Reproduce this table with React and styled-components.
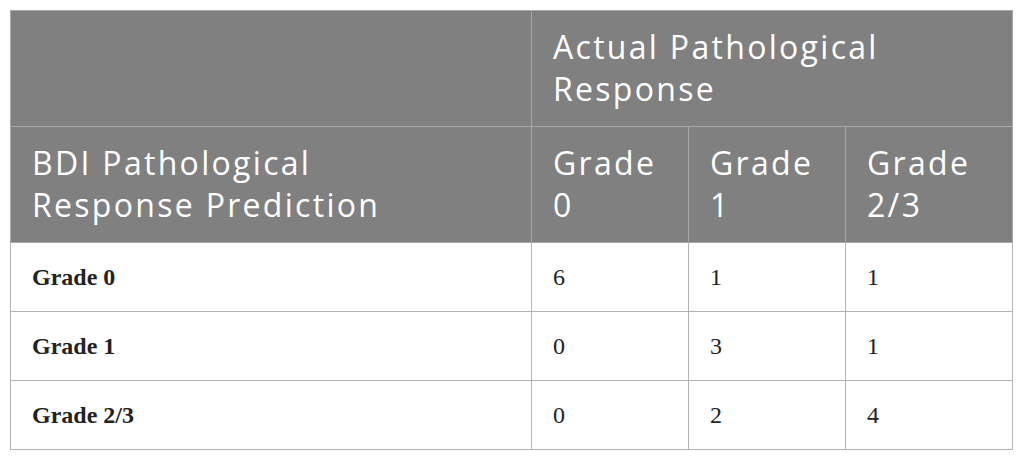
import styled, { createGlobalStyle } from 'styled-components';

const GlobalStyle = createGlobalStyle`
  html, body {
    margin: 0;
    padding: 0;
    background: #ffffff;
  }
`;

const Page = styled.div`
  padding: 10px 13px 10px 10px;
`;

const Table = styled.table`
  width: 1002px;
  border-collapse: collapse;
  table-layout: fixed;
  border: 1px solid #b3b3b3;
`;

const HeadRow = styled.tr`
  height: 116px;
  background-color: #808080;
`;

const HeadCell = styled.th`
  padding: 13px 21px 15px;
  border: 1px solid #a8a8a8;
  color: #ffffff;
  font-family: 'Open Sans', Lato, sans-serif;
  font-weight: 400;
  font-size: 32px;
  letter-spacing: 2.3px;
  line-height: 42px;
  text-align: left;
  vertical-align: middle;
  white-space: nowrap;
`;

const BodyRow = styled.tr`
  height: 69px;
`;

const BodyCell = styled.td`
  padding: 0 21px;
  border: 1px solid #b3b3b3;
  color: #222222;
  font-family: 'Liberation Serif', 'Times New Roman', serif;
  font-size: 24px;
  font-weight: ${(props) => (props.$label ? 700 : 400)};
  vertical-align: middle;
`;

const rows = [
  { label: 'Grade 0', values: [6, 1, 1] },
  { label: 'Grade 1', values: [0, 3, 1] },
  { label: 'Grade 2/3', values: [0, 2, 4] },
];

function App() {
  return (
    <Page>
      <GlobalStyle />
      <Table>
        <colgroup>
          <col style={{ width: 521 }} />
          <col style={{ width: 157 }} />
          <col style={{ width: 157 }} />
          <col style={{ width: 167 }} />
        </colgroup>
        <thead>
          <HeadRow>
            <HeadCell />
            <HeadCell colSpan={3}>
              Actual Pathological
              <br />
              Response
            </HeadCell>
          </HeadRow>
          <HeadRow>
            <HeadCell>
              BDI Pathological
              <br />
              Response Prediction
            </HeadCell>
            <HeadCell>
              Grade
              <br />0
            </HeadCell>
            <HeadCell>
              Grade
              <br />1
            </HeadCell>
            <HeadCell>
              Grade
              <br />
              2/3
            </HeadCell>
          </HeadRow>
        </thead>
        <tbody>
          {rows.map((row) => (
            <BodyRow key={row.label}>
              <BodyCell $label>{row.label}</BodyCell>
              {row.values.map((v, i) => (
                <BodyCell key={i}>{v}</BodyCell>
              ))}
            </BodyRow>
          ))}
        </tbody>
      </Table>
    </Page>
  );
}

export default App;
